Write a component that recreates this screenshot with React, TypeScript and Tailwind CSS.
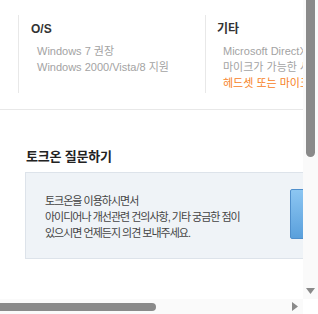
import React from "react";

const font = { fontFamily: '"Liberation Sans", "Noto Sans CJK KR", sans-serif' };

export default function App() {
  return (
    <div className="w-[318px] h-[314px] overflow-hidden bg-white flex flex-col" style={font}>
      <div className="flex h-[299px]">
        {/* page content */}
        <div className="w-[303px] h-[299px] overflow-hidden">
          {/* system requirements */}
          <div className="flex pt-[15px] pl-[18px] h-[110px] border-b border-[#e8e8e8] whitespace-nowrap overflow-hidden">
            <div className="w-[187px] shrink-0 h-[78px] border-l border-[#e8e8e8] pl-[12px] pt-[5px]">
              <p className="text-[12px] leading-[18px] font-semibold text-[#333]">O/S</p>
              <ul className="mt-[5px] pl-[6px] text-[11px] leading-[16px] text-[#a3a3a3]">
                <li>Windows 7 권장</li>
                <li>Windows 2000/Vista/8 지원</li>
              </ul>
            </div>
            <div className="w-[200px] shrink-0 h-[78px] border-l border-[#e8e8e8] pl-[11px] pt-[5px]">
              <p className="text-[12px] leading-[18px] font-semibold text-[#333]">기타</p>
              <ul className="mt-[5px] pl-[6px] text-[11px] leading-[16px] text-[#a3a3a3]">
                <li>Microsoft DirectX 9.0 이상</li>
                <li>마이크가 가능한 사운드카드</li>
                <li className="text-[#f7821e]">헤드셋 또는 마이크</li>
              </ul>
            </div>
          </div>

          {/* question section */}
          <h2 className="mt-[38px] ml-[26px] text-[13px] leading-[18px] font-bold text-[#222] tracking-[-0.2px]">
            토크온 질문하기
          </h2>
          <div className="mt-[6px] ml-[25px] w-[340px] h-[87px] bg-[#eff3f7] border border-[#dde3ea] flex items-start pt-[16px]">
            <p className="w-[264px] shrink-0 pl-[19px] pt-[4px] text-[11px] leading-[16px] tracking-[-1px] text-[#444] whitespace-nowrap">
              토크온을 이용하시면서
              <br />
              아이디어나 개선관련 건의사항, 기타 궁금한 점이
              <br />
              있으시면 언제든지 의견 보내주세요.
            </p>
            <button className="w-[60px] shrink-0 h-[50px] rounded-[2px] border border-[#4f8fcc] bg-gradient-to-b from-[#8cc6f2] to-[#5aa0dc]" />
          </div>
        </div>

        {/* vertical scrollbar */}
        <div className="w-[15px] bg-[#fafafa] flex flex-col items-center justify-between pb-[5px]">
          <div className="w-[9px] h-[157px] bg-[#8a8a8a] rounded-b-[5px]" />
          <svg width="9" height="6" viewBox="0 0 9 6">
            <polygon points="0,0 9,0 4.5,6" fill="#8a8a8a" />
          </svg>
        </div>
      </div>

      {/* horizontal scrollbar */}
      <div className="flex h-[15px]">
        <div className="w-[303px] bg-[#fafafa] flex items-center justify-between pr-[5px]">
          <div className="w-[156px] h-[8px] bg-[#8a8a8a] rounded-r-[5px]" />
          <svg width="6" height="9" viewBox="0 0 6 9">
            <polygon points="0,0 6,4.5 0,9" fill="#8a8a8a" />
          </svg>
        </div>
        <div className="w-[15px] bg-white" />
      </div>
    </div>
  );
}
